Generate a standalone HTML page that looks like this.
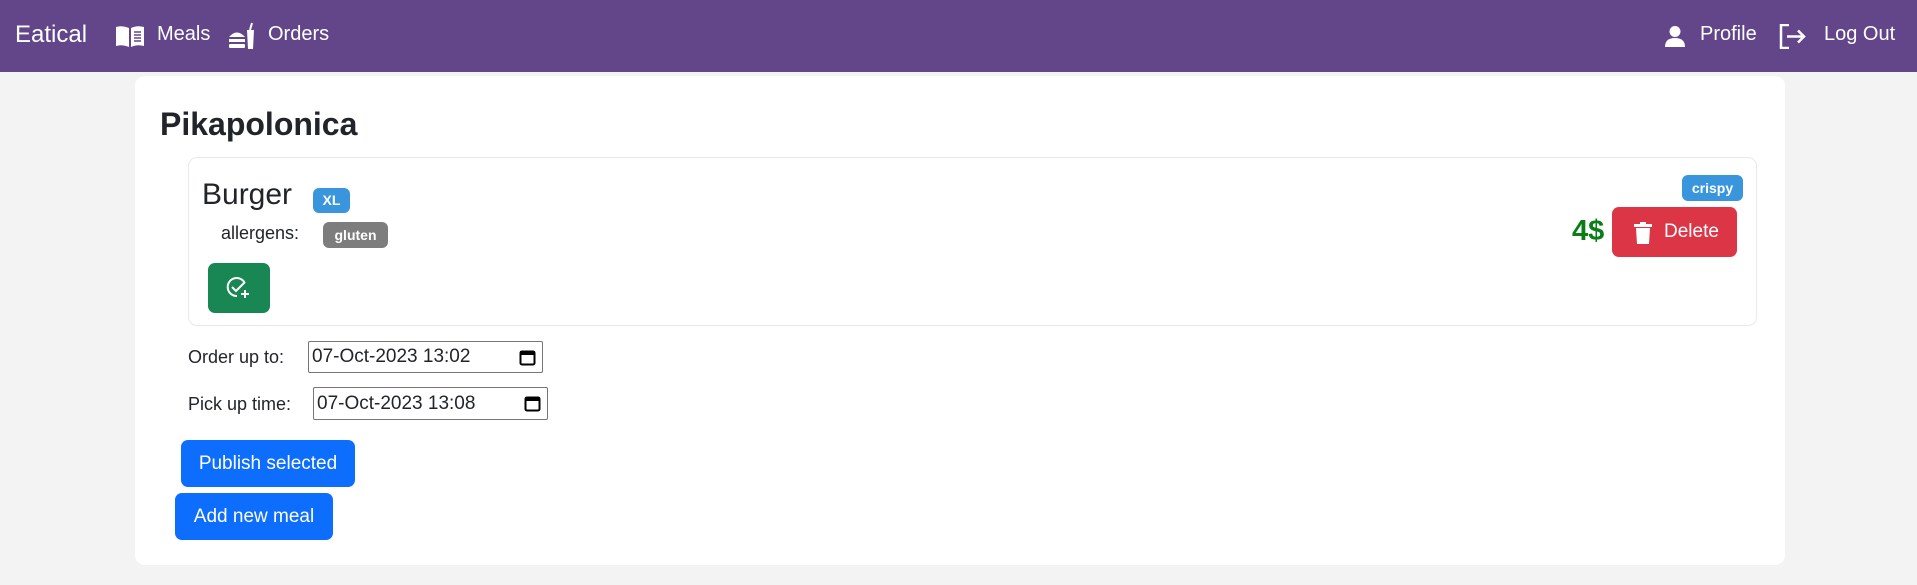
<!DOCTYPE html>
<html><head><meta charset="utf-8"><style>
*{box-sizing:border-box;margin:0;padding:0}
body{width:1917px;height:585px;background:#f3f3f3;font-family:"Liberation Sans",sans-serif;color:#212529;position:relative;overflow:hidden}
.nav{position:absolute;left:0;top:0;width:1917px;height:72px;background:#634689;color:#fff}
.a{position:absolute;white-space:nowrap}
.card{position:absolute;left:135px;top:76px;width:1650px;height:489px;background:#fff;border-radius:10px}
.inner{position:absolute;left:188px;top:157px;width:1569px;height:169px;border:1px solid #e9e9e9;border-radius:9px;background:#fff}
.badge{position:absolute;color:#fff;font-weight:bold;font-size:14px;border-radius:6px;text-align:center}
.btn{position:absolute;color:#fff;border-radius:7px;font-size:19px;text-align:center}
.inp{position:absolute;border:1px solid #767676;border-radius:2px;font-size:19px;padding-left:3px;background:#fff}
</style></head><body>
<div class="nav">
 <div class="a" style="left:15px;top:21px;font-size:24px">Eatical</div>
 <svg class="a" style="left:116px;top:25px" width="28" height="22" viewBox="0 0 28 22"><path d="M0 2Q6 0 13 3V22Q6 19 0 21Z" fill="#fff"/><path d="M15 3Q21 0 28 2V21Q21 19 15 22Z" fill="#fff"/><path d="M18 7h7M18 10h7M18 13h7M18 16h7" stroke="#634689" stroke-width="1.5"/></svg>
 <div class="a" style="left:157px;top:23px;font-size:20px">Meals</div>
 <svg class="a" style="left:228px;top:22px" width="28" height="28" viewBox="0 0 28 28"><path d="M1 15Q9 6 17 15Z" fill="#fff"/><rect x="1" y="17" width="16" height="3" fill="#fff"/><rect x="1" y="22" width="16" height="4" rx="1" fill="#fff"/><path d="M19 8h7l-1 19h-5Z" fill="#fff"/><path d="M22 8l2-7" stroke="#fff" stroke-width="2"/></svg>
 <div class="a" style="left:268px;top:23px;font-size:20px">Orders</div>
 <svg class="a" style="left:1665px;top:26px" width="20" height="21" viewBox="0 0 20 21"><circle cx="10" cy="5.5" r="5.5" fill="#fff"/><path d="M0 21Q0 12 10 12Q20 12 20 21Z" fill="#fff"/></svg>
 <div class="a" style="left:1700px;top:23px;font-size:20px">Profile</div>
 <svg class="a" style="left:1779px;top:24px" width="27" height="25" viewBox="0 0 27 25"><path d="M10 1H2V24H10" stroke="#fff" stroke-width="2.5" fill="none"/><path d="M8 12.5H25M19 6.5L25 12.5L19 18.5" stroke="#fff" stroke-width="2.5" fill="none"/></svg>
 <div class="a" style="left:1824px;top:23px;font-size:20px">Log Out</div>
</div>
<div class="card"></div>
<div class="a" style="left:160px;top:106px;font-size:32px;font-weight:bold">Pikapolonica</div>
<div class="inner"></div>
<div class="a" style="left:202px;top:178px;font-size:30px">Burger</div>
<div class="badge" style="left:313px;top:188px;width:37px;height:25px;line-height:25px;background:#3a96dc">XL</div>
<div class="a" style="left:221px;top:223px;font-size:18px">allergens:</div>
<div class="badge" style="left:323px;top:222px;width:65px;height:26px;line-height:26px;background:#7d7d7d">gluten</div>
<div class="btn" style="left:208px;top:263px;width:62px;height:50px;background:#198754">
<svg class="a" style="left:18px;top:13px" width="26" height="24" viewBox="0 0 26 24"><path d="M18.5 6.5A9 9 0 1 0 11 20" stroke="#fff" stroke-width="2" fill="none"/><path d="M6 11l4 4 9-9" stroke="#fff" stroke-width="2" fill="none"/><path d="M19 14v8M15 18h8" stroke="#fff" stroke-width="2"/></svg></div>
<div class="badge" style="left:1682px;top:175px;width:61px;height:26px;line-height:26px;background:#3a96dc">crispy</div>
<div class="a" style="left:1572px;top:215px;font-size:29px;font-weight:bold;color:#0a7d16">4$</div>
<div class="btn" style="left:1612px;top:207px;width:125px;height:50px;background:#dc3545">
<svg class="a" style="left:22px;top:15px" width="18" height="22" viewBox="0 0 18 22"><rect x="0" y="2" width="18" height="3" fill="#fff"/><rect x="6" y="0" width="6" height="3" fill="#fff"/><path d="M2 6h14l-1 16H3Z" fill="#fff"/></svg>
<span class="a" style="left:52px;top:0;line-height:50px">Delete</span></div>
<div class="a" style="left:188px;top:347px;font-size:18px">Order up to:</div>
<div class="inp" style="left:308px;top:341px;width:235px;height:32px;line-height:30px">07-Oct-2023 13:02<svg class="a" style="right:6px;top:7px" width="17" height="17" viewBox="0 0 17 17"><rect x="1.5" y="2.5" width="14" height="13" rx="1.5" stroke="#000" stroke-width="2" fill="none"/><rect x="1" y="2" width="15" height="4" fill="#000"/></svg></div>
<div class="a" style="left:188px;top:394px;font-size:18px">Pick up time:</div>
<div class="inp" style="left:313px;top:387px;width:235px;height:33px;line-height:31px">07-Oct-2023 13:08<svg class="a" style="right:6px;top:7px" width="17" height="17" viewBox="0 0 17 17"><rect x="1.5" y="2.5" width="14" height="13" rx="1.5" stroke="#000" stroke-width="2" fill="none"/><rect x="1" y="2" width="15" height="4" fill="#000"/></svg></div>
<div class="btn" style="left:181px;top:440px;width:174px;height:47px;line-height:47px;background:#0d6efd">Publish selected</div>
<div class="btn" style="left:175px;top:493px;width:158px;height:47px;line-height:47px;background:#0d6efd">Add new meal</div>
</body></html>
